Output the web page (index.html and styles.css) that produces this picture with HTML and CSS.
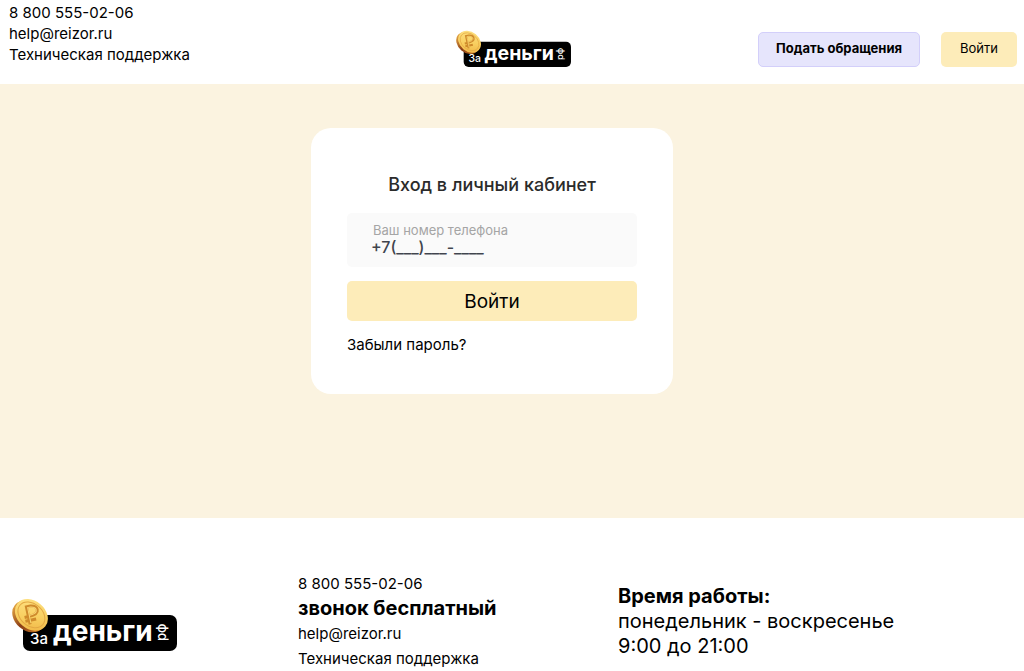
FILE: index.html
```html
<!DOCTYPE html>
<html lang="ru">
<head>
  <meta charset="UTF-8">
  <meta name="viewport" content="width=device-width, initial-scale=1">
  <title>Вход в личный кабинет</title>
  <link rel="stylesheet" href="styles.css">
</head>
<body>
  <header class="header">
    <div class="contacts">
      <a href="tel:88005550206">8 800 555-02-06</a>
      <a href="mailto:help@reizor.ru">help@reizor.ru</a>
      <a href="#">Техническая поддержка</a>
    </div>
    <a class="header-logo" href="#" aria-label="За деньги рф">
      <svg viewBox="0 0 165 54">
        <defs>
          <linearGradient id="gold" x1="0" y1="0" x2="1" y2="1">
            <stop offset="0" stop-color="#ffe58a"/>
            <stop offset="0.55" stop-color="#f8cf60"/>
            <stop offset="1" stop-color="#eeb040"/>
          </linearGradient>
          <linearGradient id="edge" x1="0" y1="0" x2="1" y2="0">
            <stop offset="0" stop-color="#e0a040"/>
            <stop offset="0.5" stop-color="#8a3d16"/>
            <stop offset="1" stop-color="#c87a25"/>
          </linearGradient>
          <g id="coin">
            <g transform="rotate(40 18 17)">
              <ellipse cx="18" cy="19" rx="18" ry="14" fill="url(#edge)"/>
              <ellipse cx="19" cy="16" rx="18" ry="14" fill="url(#gold)"/>
              <ellipse cx="19" cy="16" rx="15" ry="11" fill="none" stroke="#e3a843" stroke-width="1"/>
            </g>
            <g transform="rotate(-12 19 16)" fill="none">
              <path d="M16 26 V8 H20 Q26 9 26 13 Q26 18 16 18 M12 18 H16 M12 22 H23" stroke="#cf8b2c" stroke-width="3"/>
              <path d="M17 25 V9 H20 Q25 10 25 13 Q25 17 17 17" stroke="#f9d674" stroke-width="1"/>
            </g>
          </g>
        </defs>
        <rect x="11" y="17" width="154" height="36" rx="7"/>
        <use href="#coin"/>
        <text class="logo-small" x="18" y="46">За</text>
        <text class="logo-big" x="41" y="43">деньги</text>
        <text class="logo-rf" transform="translate(154 43) rotate(-90)">рф</text>
      </svg>
    </a>
    <div class="header-buttons">
      <button class="btn btn-request" type="button">Подать обращения</button>
      <button class="btn btn-login" type="button">Войти</button>
    </div>
  </header>

  <main class="main">
    <form class="card">
      <h1>Вход в личный кабинет</h1>
      <div class="field">
        <label for="phone">Ваш номер телефона</label>
        <input id="phone" type="tel" value="+7(___)___-____">
      </div>
      <button class="btn btn-submit" type="button">Войти</button>
      <a class="forgot" href="#">Забыли пароль?</a>
    </form>
  </main>

  <footer class="footer">
    <a class="footer-logo" href="#" aria-label="За деньги рф">
      <svg viewBox="0 0 165 54">
        <rect x="11" y="17" width="154" height="36" rx="7"/>
        <use href="#coin"/>
        <text class="logo-small" x="18" y="46">За</text>
        <text class="logo-big" x="41" y="43">деньги</text>
        <text class="logo-rf" transform="translate(154 43) rotate(-90)">рф</text>
      </svg>
    </a>
    <div class="footer-contacts">
      <a href="tel:88005550206">8 800 555-02-06</a>
      <strong>звонок бесплатный</strong>
      <a href="mailto:help@reizor.ru">help@reizor.ru</a>
      <a href="#">Техническая поддержка</a>
    </div>
    <div class="hours">
      <strong>Время работы:</strong>
      <span>понедельник - воскресенье</span>
      <span>9:00 до 21:00</span>
    </div>
  </footer>
</body>
</html>
```
FILE: styles.css
```css
* {
  box-sizing: border-box;
}

body {
  margin: 0;
  background: #fff;
  color: #000;
  font-family: Inter, "Open Sans", sans-serif;
  font-size: 15px;
}

a {
  color: inherit;
  text-decoration: none;
}

svg {
  display: block;
  width: 100%;
}

.logo-small,
.logo-big,
.logo-rf {
  fill: #fff;
  font-family: Inter, sans-serif;
}

.logo-small {
  font-size: 15px;
  font-weight: 500;
}

.logo-big {
  font-size: 28px;
  font-weight: 700;
}

.logo-rf {
  font-size: 13px;
  font-weight: 500;
}

/* header */
.header {
  display: grid;
  grid-template-columns: 1fr 115px 1fr;
  align-items: start;
  min-height: 84px;
  padding: 2px 7px 16px 9px;
}

.contacts {
  display: flex;
  flex-direction: column;
  align-items: flex-start;
  line-height: 21px;
}

.header-logo {
  margin-top: 28px;
}

.header-buttons {
  display: flex;
  justify-content: flex-end;
  gap: 21px;
  margin-top: 30px;
}

.btn {
  border: none;
  border-radius: 5px;
  background: #fdecb9;
  color: #000;
  font-family: inherit;
  cursor: pointer;
}

.btn-request,
.btn-login {
  height: 35px;
  padding: 0 19px 3px;
  font-size: 13px;
}

.btn-request {
  padding: 0 17px 3px;
  border: 1px solid #d3cffa;
  background: #e6e5fc;
  font-weight: 700;
}

/* login */
.main {
  min-height: 434px;
  padding: 44px 40px 40px 0;
  background: #fbf3e0;
}

.card {
  display: flex;
  flex-direction: column;
  max-width: 362px;
  min-height: 266px;
  margin: 0 auto;
  padding: 44px 36px 36px;
  border-radius: 20px;
  background: #fff;
}

.card h1 {
  margin: 0 0 16px;
  color: #2b2b2b;
  font-size: 18px;
  font-weight: 500;
  line-height: 25px;
  text-align: center;
}

.field {
  display: flex;
  flex-direction: column;
  height: 54px;
  margin-bottom: 14px;
  padding: 9px 24px;
  border-radius: 5px;
  background: #fafafa;
}

.field label {
  padding-left: 2px;
  color: #a5a5a5;
  font-size: 13px;
  line-height: 16px;
}

.field input {
  width: 100%;
  height: 18px;
  padding: 0;
  border: none;
  outline: none;
  background: none;
  color: #40444d;
  font-family: inherit;
  font-size: 16px;
  font-weight: 500;
}

.btn-submit {
  height: 40px;
  margin-bottom: 14px;
  font-size: 19px;
}

.forgot {
  align-self: flex-start;
  line-height: 20px;
}

/* footer */
.footer {
  display: grid;
  grid-template-columns: 286fr 320fr 406fr;
  align-items: start;
  padding: 53px 0 0 12px;
}

.footer-logo {
  width: 165px;
  margin-top: 27px;
}

.footer-contacts,
.hours {
  display: flex;
  flex-direction: column;
  align-items: flex-start;
  line-height: 25px;
}

.footer-contacts strong,
.hours {
  font-size: 20px;
}

.hours {
  margin-top: 13px;
}
```
